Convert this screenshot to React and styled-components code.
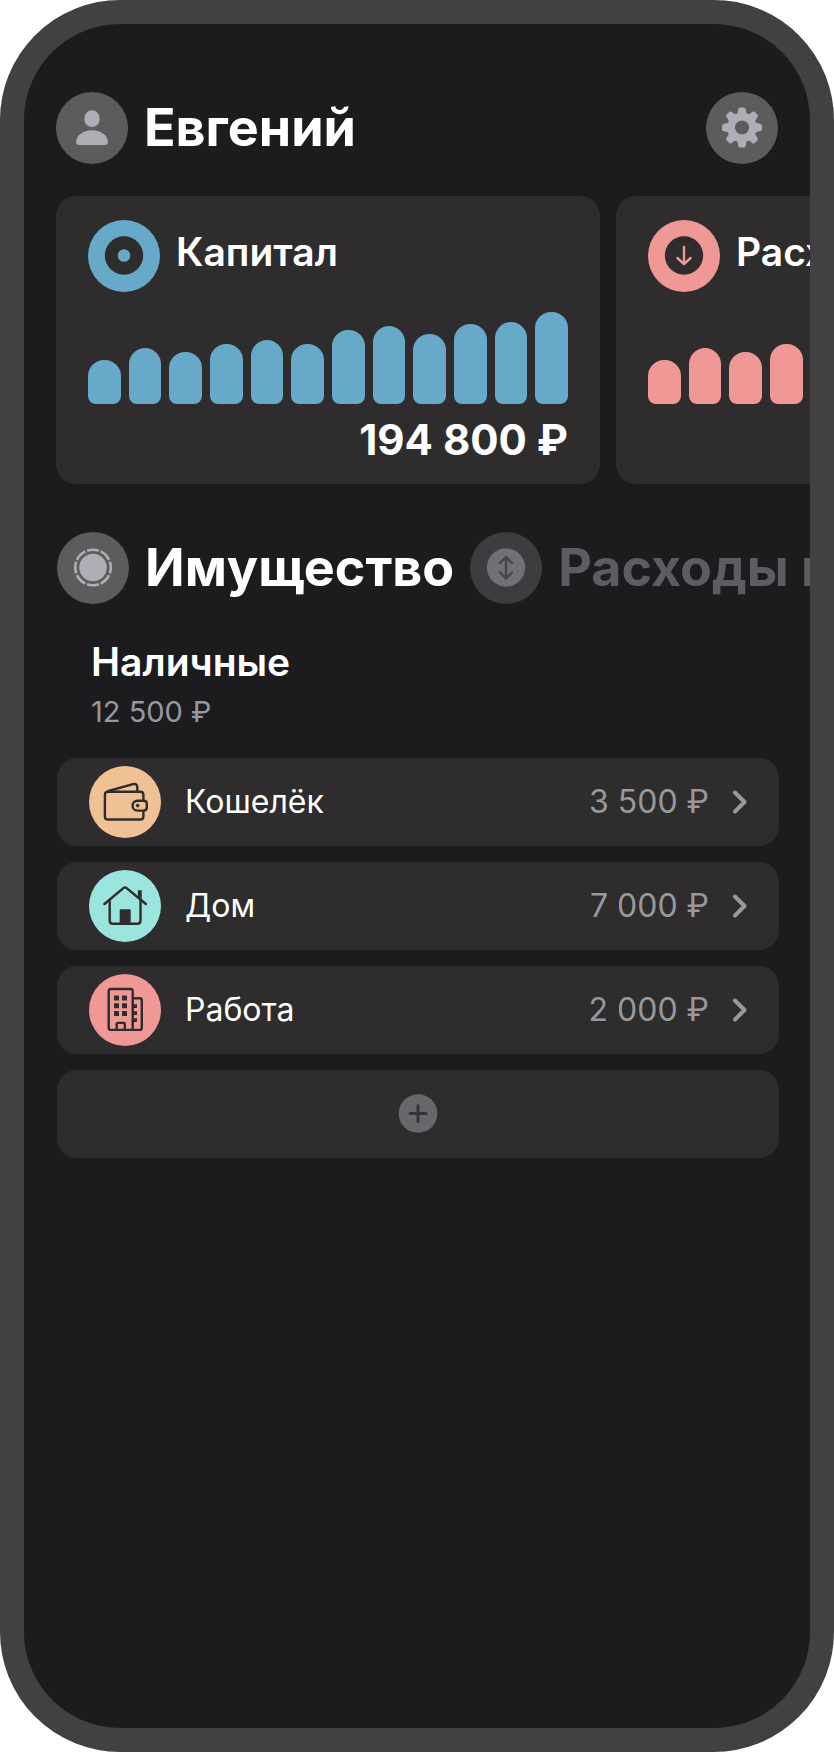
import React, { useState } from 'react'
import styled, { createGlobalStyle } from 'styled-components'

const colors = {
    screen: '#1c1c1e',
    frame: '#434041',
    card: '#2e2c2d',
    disc: '#5d5b5c',
    glyph: '#aeaeb6',
    muted: '#98989f',
    blue: '#67a9c8',
    pink: '#f09896',
    orange: '#f1c196',
    mint: '#9ae5dd',
}

const history = [44, 56, 52, 60, 64, 60, 74, 78, 70, 80, 82, 92]

const cards = [
    { id: 'capital', title: 'Капитал', color: colors.blue, total: '194 800 ₽' },
    { id: 'spend', title: 'Расходы', color: colors.pink },
]

const places = [
    { id: 'wallet', name: 'Кошелёк', sum: '3 500 ₽', color: colors.orange },
    { id: 'home', name: 'Дом', sum: '7 000 ₽', color: colors.mint },
    { id: 'work', name: 'Работа', sum: '2 000 ₽', color: colors.pink },
]

const PersonIcon = () => (
    <Glyph viewBox="0 0 72 72" fill={colors.glyph}>
        <ellipse cx="36" cy="26.7" rx="7.8" ry="8.4" />
        <path d="M23.4 53c-2.2 0-3.4-1.1-3.4-3 0-5.6 6-11.8 16-11.8S52 44.4 52 50c0 1.9-1.2 3-3.4 3z" />
    </Glyph>
)

const GearIcon = () => (
    <Glyph viewBox="0 0 72 72" fill={colors.glyph}>
        {[0, 45, 90, 135, 180, 225, 270, 315].map((angle) => (
            <path
                key={angle}
                transform={`rotate(${angle} 36 35.5)`}
                d="M30 22.5C31.5 21.5 31.8 20.5 32.1 18.5L32.4 17Q32.7 15.5 34.3 15.5H37.7Q39.3 15.5 39.6 17L39.9 18.5C40.2 20.5 40.5 21.5 42 22.5V28H30Z"
            />
        ))}
        <circle cx="36" cy="35.5" r="14" />
        <circle cx="36" cy="35.5" r="7" fill={colors.disc} />
    </Glyph>
)

const CoinIcon = () => (
    <Glyph viewBox="0 0 72 72">
        <circle cx="36" cy="35.5" r="13.7" fill={colors.glyph} />
        <circle
            cx="36"
            cy="35.5"
            r="17.8"
            fill="none"
            stroke={colors.glyph}
            strokeWidth="2.6"
            pathLength="80"
            strokeDasharray="8.6 1.4"
            strokeDashoffset="4.3"
        />
    </Glyph>
)

const ExchangeIcon = () => (
    <Glyph viewBox="0 0 72 72">
        <circle cx="36" cy="35.5" r="19.2" fill="#717076" />
        <path
            d="M36 25.5V46M30 31L36 25L42 31M30 40.5L36 46.5L42 40.5"
            fill="none"
            stroke="#464548"
            strokeWidth="2.4"
            strokeLinecap="round"
            strokeLinejoin="round"
        />
    </Glyph>
)

const CardIcon = ({ id, color }) => (
    <Glyph viewBox="0 0 72 72">
        <circle cx="36" cy="35.5" r="19.2" fill={colors.card} />
        {id === 'capital' ? (
            <circle cx="36" cy="35.5" r="6.3" fill={color} />
        ) : (
            <path
                d="M36 27V44M29.4 38L36 44L42.6 38"
                fill="none"
                stroke={color}
                strokeWidth="2.4"
                strokeLinecap="round"
                strokeLinejoin="round"
            />
        )}
    </Glyph>
)

const PlaceIcon = ({ id }) => (
    <Glyph
        viewBox="0 0 72 72"
        fill="none"
        stroke={colors.card}
        strokeWidth="2.4"
        strokeLinecap="round"
        strokeLinejoin="round"
    >
        {id === 'wallet' && (
            <>
                <path d="M54.4 33.5V28.8Q54.4 25.7 51.3 25.7H19Q15.9 25.7 15.9 28.8V50.4Q15.9 53.5 19 53.5H51.3Q54.4 53.5 54.4 50.4V45.8" />
                <path d="M19.5 25L44 18.1Q48.3 17.2 48.3 21.4V25" />
                <path d="M48.5 34.7H54.6Q57.8 34.7 57.8 37.7V41.6Q57.8 44.6 54.6 44.6H48.5A4.9 4.9 0 0 1 48.5 34.7Z" />
                <circle cx="48.7" cy="39.6" r="1.8" fill={colors.card} stroke="none" />
            </>
        )}
        {id === 'home' && (
            <>
                <path d="M15.4 34L34.7 17.9Q36 16.9 37.3 17.9L56.9 34" />
                <path d="M20.7 31V50.4Q20.7 53.7 24 53.7H48.2Q51.5 53.7 51.5 50.4V31" />
                <path d="M48.9 20.3H52.7V30.5L48.9 27.3Z" fill={colors.card} stroke="none" />
                <path
                    d="M30.7 40.5Q30.7 39.3 32 39.3H40.4Q41.7 39.3 41.7 40.5V54H30.7Z"
                    fill={colors.card}
                    stroke="none"
                />
            </>
        )}
        {id === 'work' && (
            <>
                <path d="M43.7 24.2H50.6Q52.8 24.2 52.8 26.4V53.7Q52.8 55.9 50.6 55.9H21.9Q19.7 55.9 19.7 53.7V17.2Q19.7 15 21.9 15H41.5Q43.7 15 43.7 17.2V55.9" />
                <path d="M27.7 55.9V50Q27.7 48.9 28.8 48.9H34.7Q35.8 48.9 35.8 50V55.9" />
                <path
                    d="M25 21.5h5v5h-5zM33 21.5h5v5h-5zM25 29.2h5v5h-5zM33 29.2h5v5h-5zM25 36.9h5v5h-5zM33 36.9h5v5h-5zM44 30.2h4v3.8h-4zM44 37.2h4v3.8h-4zM44 44.2h4v3.8h-4z"
                    fill={colors.card}
                    stroke="none"
                />
            </>
        )}
    </Glyph>
)

function Card({ id, title, color, total }) {
    return (
        <CardBox>
            <CardHead>
                <Disc $color={color}>
                    <CardIcon id={id} color={color} />
                </Disc>
                <CardTitle>{title}</CardTitle>
            </CardHead>
            <Chart>
                {history.map((value, i) => (
                    <Bar key={i} $color={color} style={{ height: value }} />
                ))}
            </Chart>
            {total && <Total>{total}</Total>}
        </CardBox>
    )
}

function App() {
    const [tab, setTab] = useState('assets')

    return (
        <>
            <GlobalStyle />
            <Phone>
                <Header>
                    <Disc $color={colors.disc}>
                        <PersonIcon />
                    </Disc>
                    <UserName>Евгений</UserName>
                    <DiscButton type="button" aria-label="Настройки">
                        <GearIcon />
                    </DiscButton>
                </Header>

                <Cards>
                    {cards.map((card) => (
                        <Card key={card.id} {...card} />
                    ))}
                </Cards>

                <Tabs>
                    <Tab type="button" $active={tab === 'assets'} onClick={() => setTab('assets')}>
                        <Disc $color={tab === 'assets' ? colors.disc : '#3d3c3e'}>
                            <CoinIcon />
                        </Disc>
                        Имущество
                    </Tab>
                    <Tab type="button" $active={tab === 'flow'} onClick={() => setTab('flow')}>
                        <Disc $color={tab === 'flow' ? colors.disc : '#3d3c3e'}>
                            <ExchangeIcon />
                        </Disc>
                        Расходы и доходы
                    </Tab>
                </Tabs>

                <Group>
                    <GroupHead>
                        <GroupTitle>Наличные</GroupTitle>
                        <GroupSum>12 500 ₽</GroupSum>
                    </GroupHead>
                    <List>
                        {places.map(({ id, name, sum, color }) => (
                            <li key={id}>
                                <Row type="button">
                                    <Disc $color={color}>
                                        <PlaceIcon id={id} />
                                    </Disc>
                                    <RowName>{name}</RowName>
                                    <RowSum>{sum}</RowSum>
                                    <Chevron viewBox="0 0 16 26">
                                        <path d="M4 3.5L13.5 13L4 22.5" />
                                    </Chevron>
                                </Row>
                            </li>
                        ))}
                        <li>
                            <AddRow type="button" aria-label="Добавить">
                                <svg width="40" height="40" viewBox="0 0 40 40">
                                    <circle cx="20" cy="19.5" r="19.3" fill="#69676b" />
                                    <path
                                        d="M20 11.5V27.5M12 19.5H28"
                                        stroke="#363436"
                                        strokeWidth="3"
                                        strokeLinecap="round"
                                    />
                                </svg>
                            </AddRow>
                        </li>
                    </List>
                </Group>
            </Phone>
        </>
    )
}

const GlobalStyle = createGlobalStyle`
* {
    box-sizing: border-box;
}
body {
    margin: 0;
    background: #fff;
    color: #fff;
    font-family: Inter, "Liberation Sans", sans-serif;
}
h1, h2, h3, p, ul {
    margin: 0;
    padding: 0;
}
button {
    border: none;
    padding: 0;
    color: inherit;
    font: inherit;
    cursor: pointer;
}
`;

const Phone = styled.main`
min-height: 100vh;
padding-top: 68px;
border: 24px solid ${colors.frame};
border-radius: 120px;
background: ${colors.screen};
overflow: hidden;
`;

const Glyph = styled.svg`
display: block;
width: 100%;
height: 100%;
`;

const Disc = styled.span`
flex: none;
width: 72px;
height: 72px;
border-radius: 50%;
background: ${(props) => props.$color};
`;

const DiscButton = styled.button`
width: 72px;
height: 72px;
margin-left: auto;
border-radius: 50%;
background: ${colors.disc};
`;

const Header = styled.header`
display: flex;
align-items: center;
gap: 16px;
padding: 0 32px;
`;

const UserName = styled.h1`
font-size: 52px;
line-height: 64px;
font-weight: 700;
`;

const Cards = styled.section`
display: flex;
gap: 16px;
margin-top: 32px;
padding-left: 32px;
overflow: hidden;
`;

const CardBox = styled.article`
flex: 0 0 544px;
padding: 24px 32px 20px;
border-radius: 20px;
background: ${colors.card};
`;

const CardHead = styled.div`
display: flex;
align-items: center;
gap: 16px;
`;

const CardTitle = styled.h2`
padding-bottom: 8px;
font-size: 39px;
line-height: 48px;
font-weight: 600;
`;

const Chart = styled.div`
display: flex;
align-items: flex-end;
gap: 8px;
height: 112px;
`;

const Bar = styled.div`
flex: 1;
border-radius: 16px 16px 8px 8px;
background: ${(props) => props.$color};
`;

const Total = styled.p`
margin-top: 12px;
font-size: 42px;
line-height: 48px;
font-weight: 700;
text-align: right;
`;

const Tabs = styled.nav`
display: flex;
gap: 16px;
margin-top: 48px;
padding-left: 33px;
overflow: hidden;
`;

const Tab = styled.button`
display: flex;
flex: none;
align-items: center;
gap: 16px;
background: none;
color: ${(props) => (props.$active ? '#fff' : '#5d5c61')};
font-size: 52px;
line-height: 64px;
font-weight: 700;
white-space: nowrap;
`;

const Group = styled.section`
padding: 34px 31px 0 33px;
`;

const GroupHead = styled.div`
padding: 0 34px;
`;

const GroupTitle = styled.h3`
font-size: 39px;
line-height: 48px;
font-weight: 600;
`;

const GroupSum = styled.p`
padding-top: 6px;
color: ${colors.muted};
font-size: 29px;
line-height: 40px;
`;

const List = styled.ul`
display: flex;
flex-direction: column;
gap: 16px;
padding-top: 26px;
list-style: none;
`;

const Row = styled.button`
display: flex;
align-items: center;
width: 100%;
padding: 8px 32px;
border-radius: 20px;
background: ${colors.card};
font-size: 32px;
line-height: 40px;
text-align: left;
`;

const RowName = styled.span`
flex: 1;
margin-left: 24px;
`;

const RowSum = styled.span`
color: ${colors.muted};
`;

const Chevron = styled.svg`
width: 16px;
height: 26px;
margin-left: 22px;
fill: none;
stroke: ${colors.muted};
stroke-width: 4;
stroke-linecap: round;
stroke-linejoin: round;
`;

const AddRow = styled(Row)`
justify-content: center;
padding: 24px 32px;
`;

export default App
